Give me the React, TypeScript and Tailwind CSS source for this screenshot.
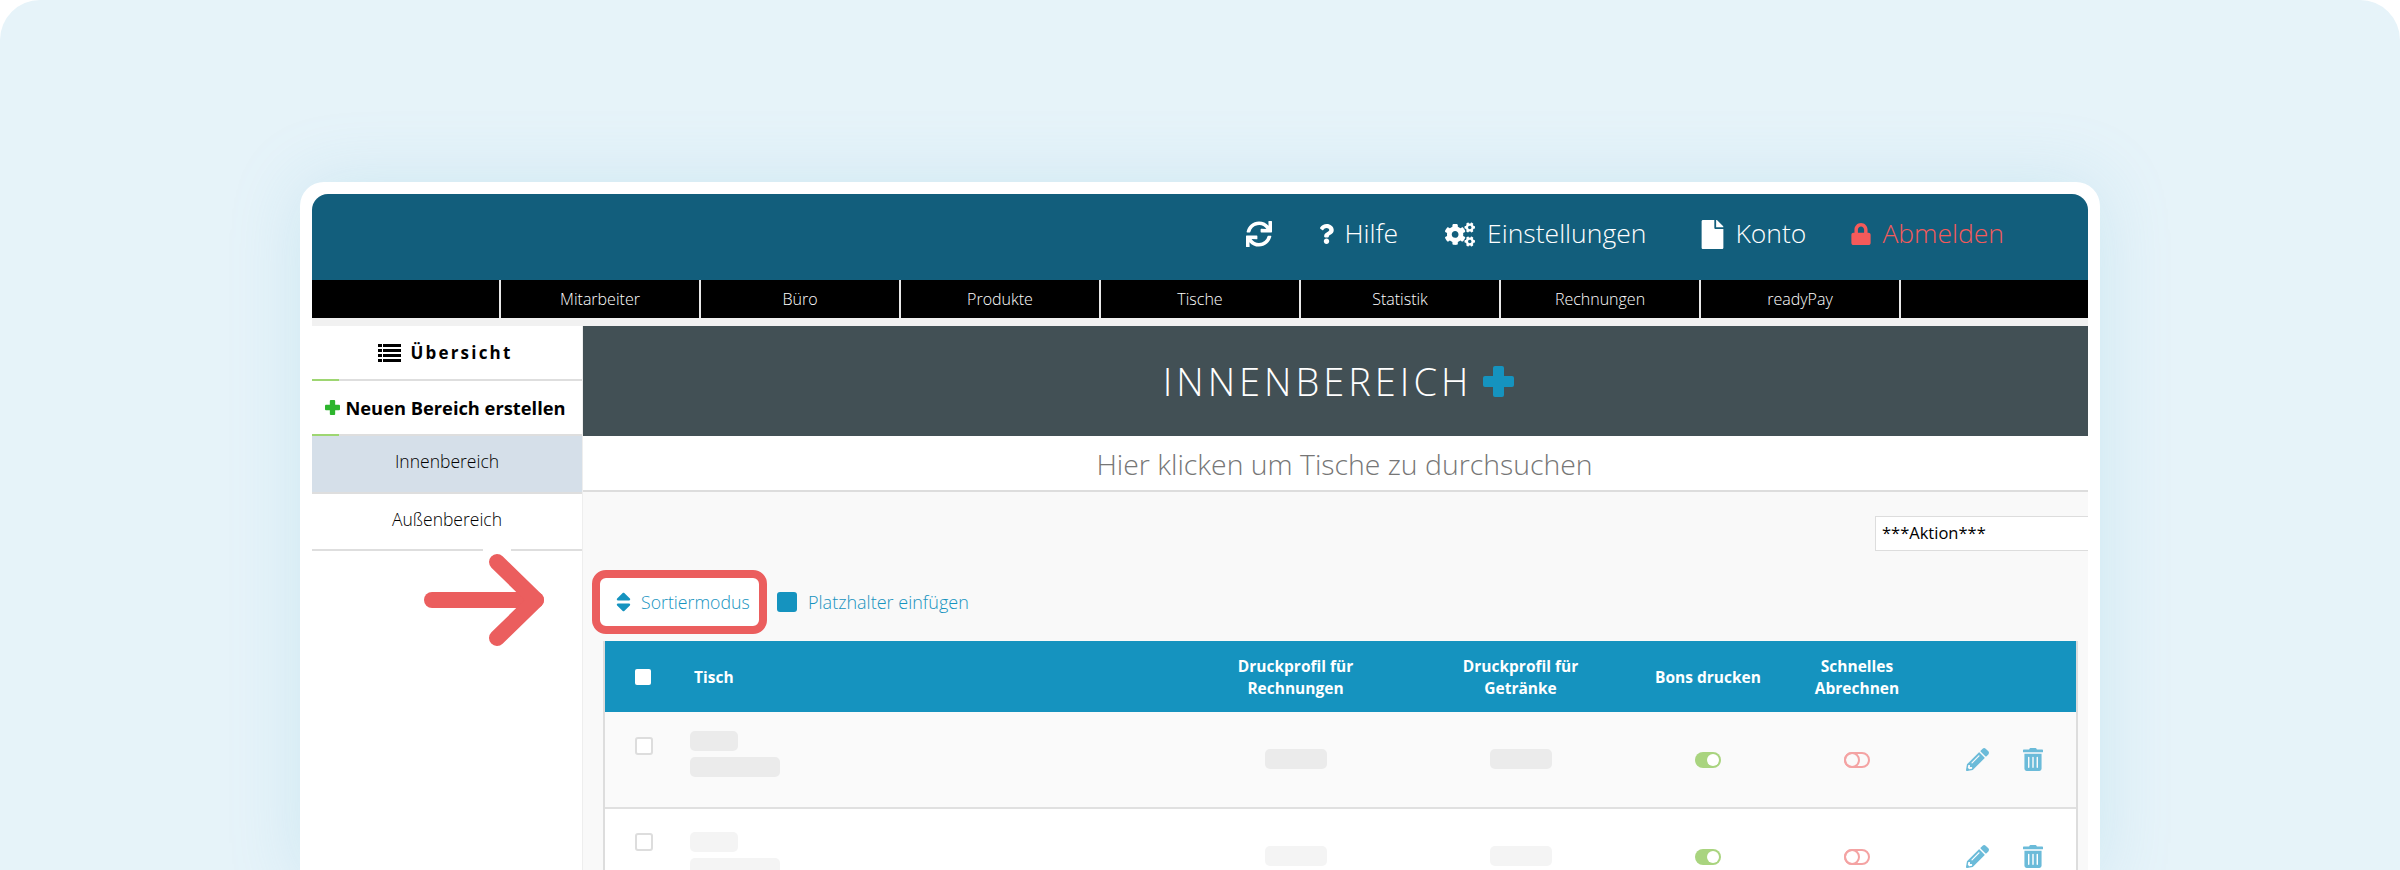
import { FaCogs, FaFile, FaLock, FaPencilAlt, FaQuestion, FaSort, FaSync, FaTrashAlt } from "react-icons/fa";

const tabs = ["Mitarbeiter", "Büro", "Produkte", "Tische", "Statistik", "Rechnungen", "readyPay"];

const tableCols = "grid grid-cols-[85px_493px_225px_225px_150px_148px_1fr]";

function ListIcon() {
  return (
    <svg viewBox="0 0 23 18" className="h-[18px] w-[23px] fill-black">
      <rect x="0" y="0" width="4" height="3" />
      <rect x="5" y="0" width="18" height="3" />
      <rect x="0" y="5" width="4" height="3" />
      <rect x="5" y="5" width="18" height="3" />
      <rect x="0" y="10" width="4" height="3" />
      <rect x="5" y="10" width="18" height="3" />
      <rect x="0" y="15" width="4" height="3" />
      <rect x="5" y="15" width="18" height="3" />
    </svg>
  );
}

function PlusIcon({ className }: { className: string }) {
  return (
    <svg viewBox="0 0 31 31" className={className} fill="currentColor">
      <rect x="10" y="0" width="11" height="31" rx="2" />
      <rect x="0" y="10" width="31" height="11" rx="2" />
    </svg>
  );
}

function Arrow() {
  return (
    <svg viewBox="0 0 130 100" className="absolute left-[112px] top-[223px] h-[100px] w-[130px]" fill="none">
      <rect x="59" y="0" width="28" height="4" fill="#fff" />
      <path d="M8 51H112" stroke="#eb5e5e" strokeWidth="16" strokeLinecap="round" />
      <path d="M73 13L112 51L73 89" stroke="#eb5e5e" strokeWidth="16" strokeLinecap="round" strokeLinejoin="round" />
    </svg>
  );
}

function SideItem({
  children,
  height,
  accent,
  active,
}: {
  children: React.ReactNode;
  height: string;
  accent?: boolean;
  active?: boolean;
}) {
  return (
    <div className={`relative flex items-center justify-center border-b-2 border-[#dedede] ${height} ${active ? "bg-[#d5dfe9]" : "bg-white"}`}>
      {children}
      {accent && <span className="absolute bottom-[-2px] left-0 h-[2px] w-[27px] bg-[#9ed672]" />}
    </div>
  );
}

function Skeleton({ w, tone }: { w: string; tone: string }) {
  return <div className={`h-5 rounded-[5px] ${w} ${tone}`} />;
}

function Row({ bg, tone, nameTop, boxTop }: { bg: string; tone: string; nameTop: string; boxTop: string }) {
  return (
    <div className={`${tableCols} h-[97px] border-b-2 border-[#e0e0e0] ${bg}`}>
      <div className={`pl-[30px] ${boxTop}`}>
        <div className="h-[18px] w-[18px] rounded-[3px] border-2 border-[#dddddd] bg-white" />
      </div>
      <div className={`flex flex-col gap-[6px] ${nameTop}`}>
        <Skeleton w="w-12" tone={tone} />
        <Skeleton w="w-[90px]" tone={tone} />
      </div>
      <div className="flex justify-center pt-[37px]">
        <Skeleton w="w-[62px]" tone={tone} />
      </div>
      <div className="flex justify-center pt-[37px]">
        <Skeleton w="w-[62px]" tone={tone} />
      </div>
      <div className="flex justify-center pt-10">
        <div className="flex h-4 w-[26px] justify-end rounded-full bg-[#a9d47f] p-[2px]">
          <div className="h-3 w-3 rounded-full bg-white" />
        </div>
      </div>
      <div className="flex justify-center pt-10">
        <div className="h-4 w-[26px] rounded-full border-2 border-[#f4a3a3]">
          <div className="ml-[-2px] mt-[-2px] h-4 w-4 rounded-full border-2 border-[#f4a3a3]" />
        </div>
      </div>
      <div className="flex items-start gap-[34px] pl-[35px] pt-9 text-[#6bbbd9]">
        <FaPencilAlt className="h-[23px] w-[23px]" />
        <FaTrashAlt className="h-[23px] w-5" />
      </div>
    </div>
  );
}

export default function App() {
  return (
    <div className="h-[870px] w-[2400px] overflow-hidden bg-white font-['Open_Sans',sans-serif]">
      <div className="h-full rounded-t-[40px] bg-[#e6f3f9] px-[300px] pt-[182px]">
        <div className="h-[700px] rounded-t-[24px] bg-white px-3 pt-3 shadow-[0_0_70px_rgba(120,190,220,0.22)]">
          <header className="flex h-[86px] items-center justify-end rounded-t-[16px] bg-[#125e7c] pb-[6px] pr-[84px] text-[26.5px] font-light text-white">
            <FaSync className="mr-[47px] h-[26px] w-[26px]" />
            <FaQuestion className="mr-[11px] h-[22px] w-[15px]" />
            <span className="mr-[47px]">Hilfe</span>
            <FaCogs className="mr-3 h-[27px] w-[30px]" />
            <span className="mr-[55px]">Einstellungen</span>
            <FaFile className="mr-[11px] h-[29px] w-[23px]" />
            <span className="mr-[45px]">Konto</span>
            <FaLock className="mr-[11px] h-[22px] w-5 text-[#f55a5a]" />
            <span className="text-[#f55a5a]">Abmelden</span>
          </header>

          <nav className="flex h-[38px] bg-black pl-[187px] text-base font-light text-white">
            {tabs.map((tab) => (
              <div key={tab} className="flex w-[200px] items-center justify-center border-l-2 border-[#e8e8e8] last:w-[202px] last:border-r-2">
                {tab}
              </div>
            ))}
          </nav>
          <div className="h-2 bg-[#f1f1f1]" />

          <div className="relative flex h-[600px]">
            <aside className="w-[270px] bg-white">
              <SideItem height="h-[55px] pr-[3px]" accent>
                <span className="flex items-center gap-[9px] text-[17px] font-bold tracking-[2.2px] text-black">
                  <ListIcon />
                  Übersicht
                </span>
              </SideItem>
              <SideItem height="h-[55px] pr-[3px]" accent>
                <span className="flex items-center gap-[5px] text-[18.3px] font-bold text-black">
                  <PlusIcon className="h-[15px] w-[15px] text-[#2db52d]" />
                  Neuen Bereich erstellen
                </span>
              </SideItem>
              <SideItem height="h-[58px] pb-[6px]" active>
                <span className="text-[17.5px] font-light text-black">Innenbereich</span>
              </SideItem>
              <SideItem height="h-[57px] pb-[5px]">
                <span className="text-[17.5px] font-light text-black">Außenbereich</span>
              </SideItem>
            </aside>

            <main className="flex-1 border-l border-[#eeeeee] bg-[#f9f9f9]">
              <div className="flex h-[110px] items-center justify-center gap-[11px] bg-[#425055] pl-[6px]">
                <h1 className="text-[38px] font-light tracking-[4px] text-white">INNENBEREICH</h1>
                <PlusIcon className="h-[31px] w-[31px] text-[#1593bf]" />
              </div>
              <div className="flex h-[56px] items-center justify-center border-b-2 border-[#dddddd] bg-white pl-[18px] pt-[3px] text-[28.4px] font-light text-[#767676]">
                Hier klicken um Tische zu durchsuchen
              </div>

              <div className="flex justify-end pt-6">
                <div className="flex h-[35px] w-[213px] items-center border border-r-0 border-[#dddddd] bg-white pl-[6px] text-[16.5px] text-black">
                  ***Aktion***
                </div>
              </div>

              <div className="ml-[9px] mt-[19px] flex h-16 items-center text-[18px] font-light text-[#1593bf]">
                <div className="flex h-16 w-[175px] items-center gap-[10px] rounded-[14px] border-8 border-[#eb5e5e] bg-white pl-4">
                  <FaSort className="h-6 w-[15px]" />
                  <span className="text-[17.7px]">Sortiermodus</span>
                </div>
                <span className="ml-[10px] h-5 w-5 rounded-[3px] bg-[#1593bf]" />
                <span className="ml-[11px]">Platzhalter einfügen</span>
              </div>

              <div className="ml-[20px] mr-[10px] mt-[7px] border-x-2 border-[#dddddd]">
                <div className={`${tableCols} h-[71px] items-center bg-[#1593bf] text-center text-[15.5px] font-bold leading-[22px] text-white`}>
                  <div className="pl-[30px]">
                    <div className="h-4 w-4 rounded-[2px] bg-white" />
                  </div>
                  <div className="pl-1 text-left">Tisch</div>
                  <div>
                    Druckprofil für
                    <br />
                    Rechnungen
                  </div>
                  <div>
                    Druckprofil für
                    <br />
                    Getränke
                  </div>
                  <div>Bons drucken</div>
                  <div>
                    Schnelles
                    <br />
                    Abrechnen
                  </div>
                  <div />
                </div>
                <Row bg="bg-[#fafafa]" tone="bg-[#ebebeb]" nameTop="pt-[19px]" boxTop="pt-[25px]" />
                <Row bg="bg-white" tone="bg-[#f4f4f4]" nameTop="pt-[23px]" boxTop="pt-6" />
              </div>
            </main>

            <Arrow />
          </div>
        </div>
      </div>
    </div>
  );
}
